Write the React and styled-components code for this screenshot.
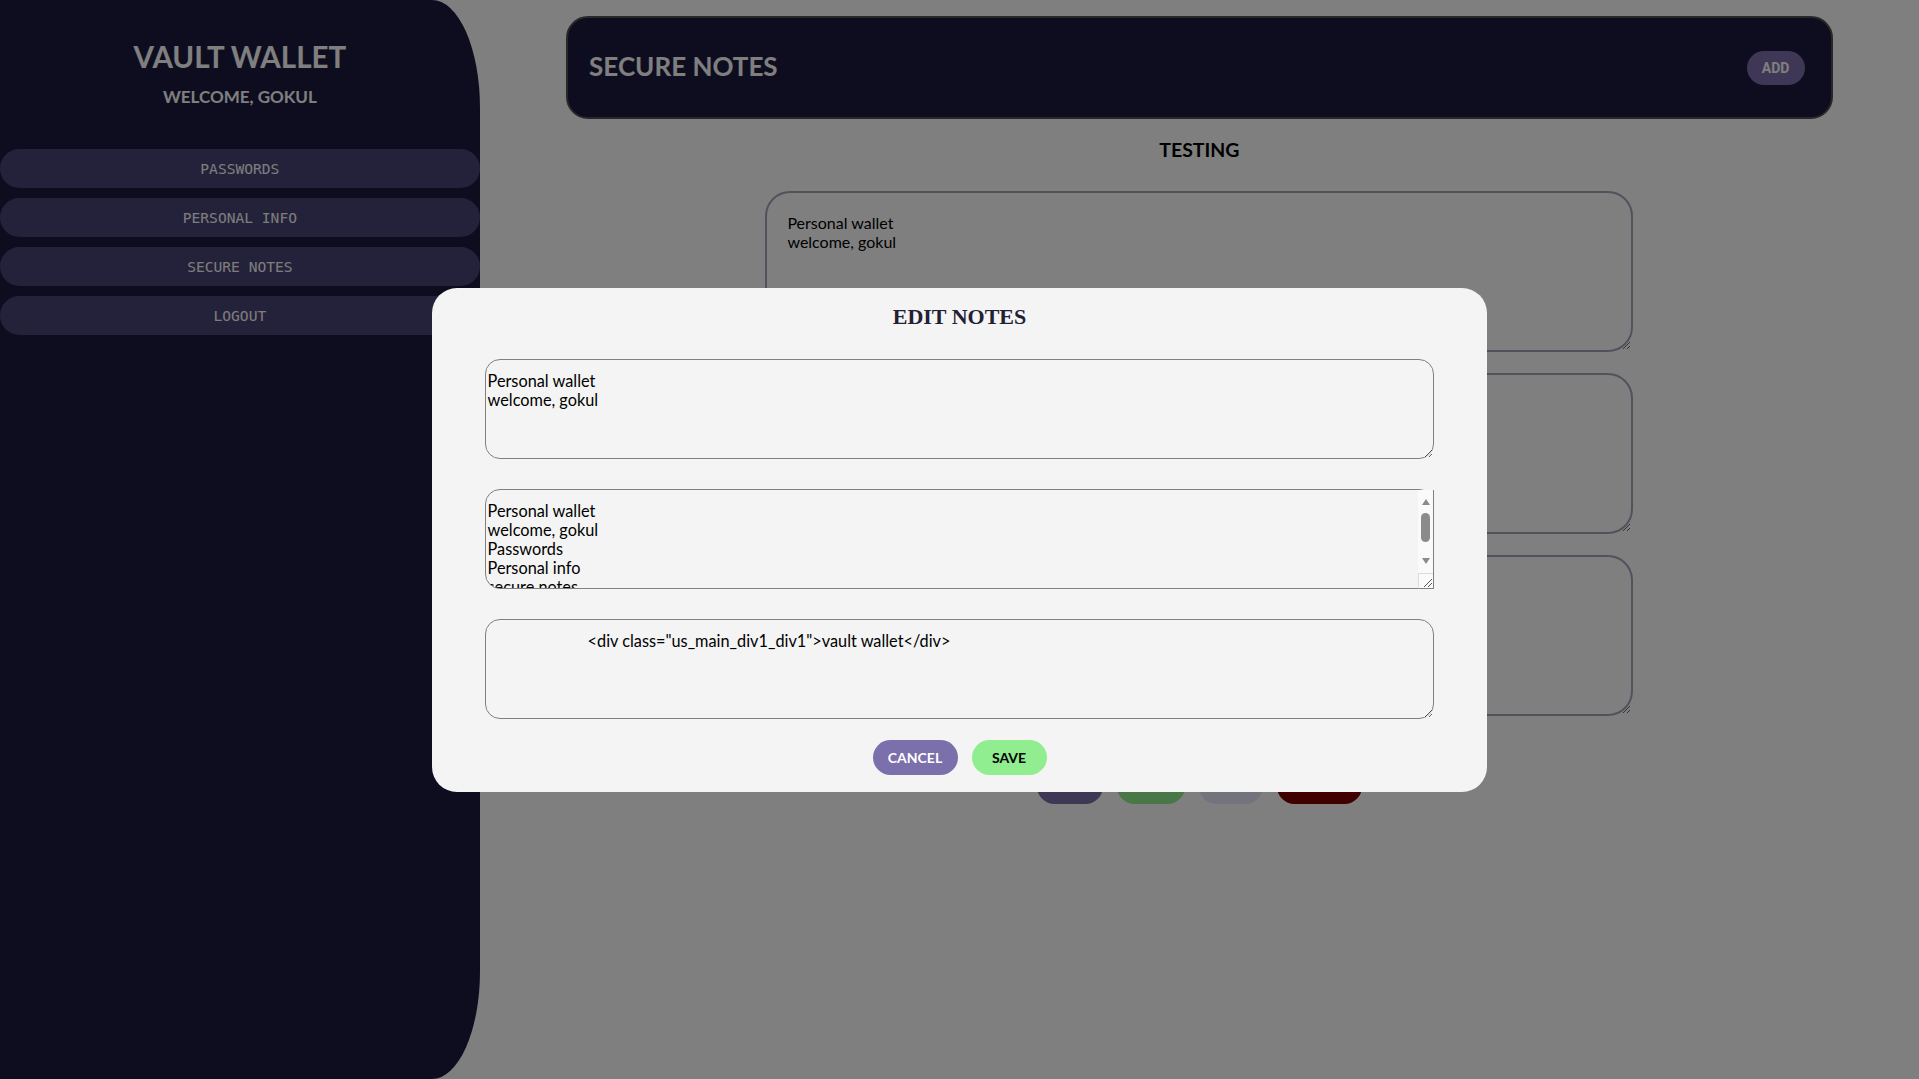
import React from 'react'
import styled, { createGlobalStyle } from 'styled-components'

const GlobalStyle = createGlobalStyle`
  html, body {
    margin: 0;
    padding: 0;
    height: 100%;
    overflow: hidden;
    background: #fff;
  }
  body {
    font-family: Lato, 'Liberation Sans', sans-serif;
  }
  * {
    box-sizing: border-box;
  }
`

const Wrapper = styled.div`
  display: flex;
  width: 100vw;
  height: 100vh;
  background: #fff;
`

const SideBar = styled.aside`
  flex: 0 0 25%;
  height: 100vh;
  background: #1c1a40;
  border-radius: 0 10% 10% 0;
  display: flex;
  flex-direction: column;
  align-items: center;
  padding-top: 39px;
`

const Brand = styled.h1`
  margin: 0;
  font-size: 29.5px;
  line-height: 36px;
  font-weight: 700;
  color: #fff;
`

const Welcome = styled.h2`
  margin: 11px 0 0;
  font-size: 17px;
  line-height: 22px;
  font-weight: 700;
  color: #fff;
`

const Nav = styled.nav`
  width: 100%;
  margin-top: 41px;
  display: flex;
  flex-direction: column;
  gap: 10px;
`

const NavButton = styled.button`
  width: 100%;
  height: 39px;
  border: none;
  border-radius: 20px;
  background: #484274;
  color: #fafafa;
  font-family: 'DejaVu Sans Mono', 'Liberation Mono', monospace;
  font-size: 14.6px;
  cursor: pointer;
`

const Main = styled.main`
  flex: 1;
  display: flex;
  flex-direction: column;
  align-items: center;
  padding-top: 16px;
`

const TopBar = styled.header`
  width: 88%;
  height: 103px;
  background: #1c1a40;
  border: 2px solid #505050;
  border-radius: 22px;
  display: flex;
  align-items: center;
  justify-content: space-between;
  padding: 0 26px 0 21px;
`

const PageTitle = styled.h2`
  margin: 0 0 4px;
  font-size: 26px;
  font-weight: 700;
  color: #fff;
`

const AddButton = styled.button`
  width: 58px;
  height: 34px;
  border: none;
  border-radius: 17px;
  background: #7c70ac;
  color: #fff;
  font-family: Roboto, 'Liberation Sans', sans-serif;
  font-weight: 700;
  font-size: 14px;
`

const NoteHeading = styled.h3`
  margin: 19px 0 0;
  font-size: 19.5px;
  line-height: 24px;
  font-weight: 700;
  color: #000;
`

const NoteList = styled.div`
  width: 100%;
  margin-top: 29px;
  display: flex;
  flex-direction: column;
  align-items: center;
  gap: 21px;
`

const NoteArea = styled.textarea`
  width: 60.3%;
  height: 161px;
  padding: 20px;
  border: 2px solid #a4a3b8;
  border-radius: 25px;
  background: transparent;
  color: #000;
  font-family: Lato, 'Liberation Sans', sans-serif;
  font-size: 16px;
`

const ActionRow = styled.div`
  margin-top: 53px;
  display: flex;
  gap: 14px;
`

const PillButton = styled.button`
  height: 35px;
  width: ${(p) => p.$w}px;
  border: none;
  border-radius: 18px;
  background: ${(p) => p.$bg};
  color: ${(p) => p.$fg};
  font-family: Lato, 'Liberation Sans', sans-serif;
  font-weight: 700;
  font-size: 14px;
`

const NoteAction = styled(PillButton)`
  padding-bottom: 12px;
`

const Overlay = styled.div`
  position: fixed;
  inset: 0;
  background: rgba(0, 0, 0, 0.5);
  display: flex;
  align-items: center;
  justify-content: center;
`

const Modal = styled.div`
  width: 55%;
  background: #f4f4f4;
  border-radius: 25px;
  padding: 16px 0 17px;
  display: flex;
  flex-direction: column;
  align-items: center;
`

const ModalTitle = styled.h2`
  margin: 0;
  font-family: 'Liberation Serif', 'Times New Roman', serif;
  font-size: 22px;
  line-height: 26px;
  font-weight: 700;
  color: #222033;
`

const EditField = styled.div`
  position: relative;
  width: 90%;
  height: 100px;
  margin-top: ${(p) => p.$top}px;
`

const EditArea = styled.textarea`
  display: block;
  width: 100%;
  height: 100%;
  padding: 11px 2px 9px;
  border: 1px solid #808080;
  border-radius: 15px;
  background: transparent;
  color: #000;
  font-family: Lato, 'Liberation Sans', sans-serif;
  font-size: 16.3px;
`

/* classic scrollbar drawn over the overflowing textarea */
const ScrollBar = styled.div`
  position: absolute;
  top: 1px;
  right: 0;
  bottom: 0;
  width: 16px;
  display: flex;
  flex-direction: column;
  background: #fafafa;
  border-right: 1px solid #808080;
  pointer-events: none;
`

const ScrollTrack = styled.div`
  flex: 1;
  display: flex;
  flex-direction: column;
  align-items: center;
`

const ArrowButton = styled.div`
  height: 17px;
  width: 100%;
  display: flex;
  justify-content: center;
  align-items: ${(p) => (p.$down ? 'flex-start' : 'flex-end')};
  padding: 2px 0;

  &::after {
    content: '';
    border-left: 4.5px solid transparent;
    border-right: 4.5px solid transparent;
    ${(p) => (p.$down ? 'border-top' : 'border-bottom')}: 6px solid #8b8b8b;
  }
`

const ThumbSlot = styled.div`
  flex: 1;
  padding-top: 6px;
`

const Thumb = styled.div`
  width: 9px;
  height: 29px;
  border-radius: 5px;
  background: #8b8b8b;
`

const Resizer = styled.div`
  height: 16px;
  width: 100%;
  background: #fafafa;
  border-top: 1px solid #dcdcdc;
  border-left: 1px solid #dcdcdc;
  border-bottom: 1px solid #808080;
  display: flex;
  align-items: flex-end;
  justify-content: flex-end;
`

const ModalActions = styled.div`
  margin-top: 21px;
  display: flex;
  gap: 14px;
`

const GripIcon = () => (
  <svg width="12" height="12" viewBox="0 0 12 12">
    <path d="M11 3 L3 11 M11 7 L7 11" stroke="#555" strokeWidth="1" fill="none" />
  </svg>
)

const title = 'Personal wallet\nwelcome, gokul'
const shortBody = 'Personal wallet\nwelcome, gokul\nPasswords\nPersonal info\nsecure notes'
const body =
  'Personal wallet\nwelcome, gokul\nPasswords\nPersonal info\nsecure notes\nlogout\nAdd\nTesting\nCancel\nSave'
const code = '\t\t\t<div class="us_main_div1_div1">vault wallet</div>'

const App = () => {
  return (
    <>
      <GlobalStyle />
      <Wrapper>
        <SideBar>
          <Brand>VAULT WALLET</Brand>
          <Welcome>WELCOME, GOKUL</Welcome>
          <Nav>
            <NavButton>PASSWORDS</NavButton>
            <NavButton>PERSONAL INFO</NavButton>
            <NavButton>SECURE NOTES</NavButton>
            <NavButton>LOGOUT</NavButton>
          </Nav>
        </SideBar>

        <Main>
          <TopBar>
            <PageTitle>SECURE NOTES</PageTitle>
            <AddButton>ADD</AddButton>
          </TopBar>
          <NoteHeading>TESTING</NoteHeading>
          <NoteList>
            <NoteArea defaultValue={title} />
            <NoteArea defaultValue={shortBody} />
            <NoteArea defaultValue={code} />
          </NoteList>
          <ActionRow>
            <NoteAction $w={66} $bg="#7c70ac" $fg="#fff">EDIT</NoteAction>
            <NoteAction $w={68} $bg="#90ee90" $fg="#000">COPY</NoteAction>
            <NoteAction $w={64} $bg="#e6e6fa" $fg="#000">VIEW</NoteAction>
            <NoteAction $w={85} $bg="#800000" $fg="#fff">DELETE</NoteAction>
          </ActionRow>
        </Main>
      </Wrapper>

      <Overlay>
        <Modal>
          <ModalTitle>EDIT NOTES</ModalTitle>
          <EditField $top={29}>
            <EditArea defaultValue={title} />
          </EditField>
          <EditField $top={30}>
            <EditArea defaultValue={body} />
            <ScrollBar aria-hidden="true">
              <ScrollTrack>
                <ArrowButton />
                <ThumbSlot>
                  <Thumb />
                </ThumbSlot>
                <ArrowButton $down />
              </ScrollTrack>
              <Resizer>
                <GripIcon />
              </Resizer>
            </ScrollBar>
          </EditField>
          <EditField $top={30}>
            <EditArea defaultValue={code} />
          </EditField>
          <ModalActions>
            <PillButton $w={85} $bg="#7c70ac" $fg="#fff">CANCEL</PillButton>
            <PillButton $w={75} $bg="#90ee90" $fg="#000">SAVE</PillButton>
          </ModalActions>
        </Modal>
      </Overlay>
    </>
  )
}

export default App
